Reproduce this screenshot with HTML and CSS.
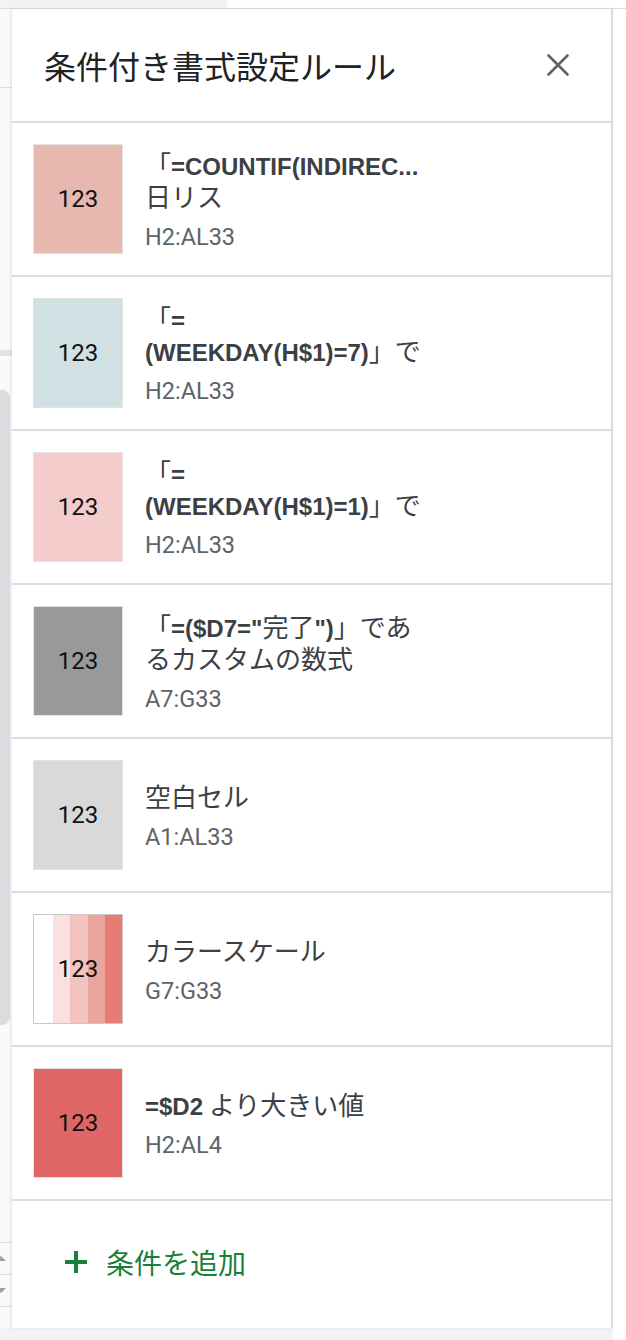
FILE: index.html
```html
<!DOCTYPE html>
<html lang="ja">
<head>
<meta charset="utf-8">
<title>条件付き書式設定ルール</title>
<link rel="stylesheet" href="styles.css">
</head>
<body>
<div class="topbar"><div class="topbar-tab"></div></div>
<div class="main">
  <div class="gutter">
    <div class="g-a"></div>
    <div class="g-line"></div>
    <div class="g-b"></div>
    <div class="g-band"></div>
    <div class="g-c"></div>
    <div class="g-thumb"></div>
    <div class="g-d"></div>
    <div class="g-btn"><span class="tri-up"></span></div>
    <div class="g-btn"><span class="tri-down"></span></div>
    <div class="g-e"></div>
  </div>
  <aside class="panel">
    <header class="panel-header">
      <h1 class="panel-title">条件付き書式設定ルール</h1>
      <button class="close-btn" aria-label="閉じる">
        <svg width="24" height="24" viewBox="0 0 24 24"><path d="M2.5 2.5L21.5 21.5M21.5 2.5L2.5 21.5" stroke="#5f6368" stroke-width="2.6" stroke-linecap="round" fill="none"/></svg>
      </button>
    </header>

    <div class="rule">
      <div class="swatch sw-berry">123</div>
      <div class="rule-text">
        <div class="line"><span class="ja">「</span><b>=COUNTIF(INDIREC...</b></div>
        <div class="line"><span class="ja">日リス</span></div>
        <div class="line range">H2:AL33</div>
      </div>
    </div>

    <div class="rule">
      <div class="swatch sw-cyan">123</div>
      <div class="rule-text">
        <div class="line"><span class="ja">「</span><b>=</b></div>
        <div class="line"><b>(WEEKDAY(H$1)=7)</b><span class="ja">」で</span></div>
        <div class="line range">H2:AL33</div>
      </div>
    </div>

    <div class="rule">
      <div class="swatch sw-pink">123</div>
      <div class="rule-text">
        <div class="line"><span class="ja">「</span><b>=</b></div>
        <div class="line"><b>(WEEKDAY(H$1)=1)</b><span class="ja">」で</span></div>
        <div class="line range">H2:AL33</div>
      </div>
    </div>

    <div class="rule">
      <div class="swatch sw-dark">123</div>
      <div class="rule-text">
        <div class="line"><span class="ja">「</span><b>=($D7="</b><span class="ja">完了</span><b>")</b><span class="ja">」であ</span></div>
        <div class="line"><span class="ja">るカスタムの数式</span></div>
        <div class="line range">A7:G33</div>
      </div>
    </div>

    <div class="rule">
      <div class="swatch sw-gray">123</div>
      <div class="rule-text">
        <div class="line"><span class="ja">空白セル</span></div>
        <div class="line range">A1:AL33</div>
      </div>
    </div>

    <div class="rule">
      <div class="swatch sw-scale">123</div>
      <div class="rule-text">
        <div class="line"><span class="ja">カラースケール</span></div>
        <div class="line range">G7:G33</div>
      </div>
    </div>

    <div class="rule">
      <div class="swatch sw-red">123</div>
      <div class="rule-text">
        <div class="line"><b>=$D2</b> <span class="ja">より大きい値</span></div>
        <div class="line range">H2:AL4</div>
      </div>
    </div>

    <div class="add-rule">
      <svg class="plus" width="24" height="24" viewBox="0 0 24 24"><path d="M12 1V23M1 12H23" stroke="#188038" stroke-width="4" fill="none"/></svg>
      <span class="add-label">条件を追加</span>
    </div>
  </aside>
</div>
<div class="bottombar"></div>
</body>
</html>
```

FILE: styles.css
```css
html, body {
  margin: 0;
  padding: 0;
}

body {
  width: 626px;
  height: 1340px;
  overflow: hidden;
  background: #ffffff;
  font-family: Roboto, "Noto Sans CJK JP", sans-serif;
  color: #3c4043;
}

.topbar {
  height: 8px;
  border-bottom: 1px solid #dadce0;
  display: flex;
}

.topbar-tab {
  width: 227px;
  background: #f1f3f4;
}

.main {
  display: flex;
  height: 1319px;
}

/* spreadsheet strip visible at the left */
.gutter {
  width: 12px;
  flex: none;
  display: flex;
  flex-direction: column;
  background: #fafafa;
  overflow: hidden;
}

.g-a { height: 78px; background: #f8f9fa; }
.g-line { height: 1px; background: #dadce0; }
.g-b { height: 262px; background: #f8f9fa; }
.g-band { height: 6px; background: #e3e3e3; }
.g-c { height: 34px; }
.g-thumb {
  height: 635px;
  width: 10px;
  background: #dadce0;
  border-radius: 0 8px 8px 0;
}
.g-d { height: 217px; }
.g-btn {
  height: 31px;
  border-top: 1px solid #dadce0;
  display: flex;
  align-items: center;
}
.g-e {
  flex: 1;
  border-top: 1px solid #dadce0;
}

.tri-up, .tri-down {
  width: 0;
  height: 0;
  margin-left: -4px;
  border-left: 5px solid transparent;
  border-right: 5px solid transparent;
}
.tri-up { border-bottom: 5px solid #9aa0a6; }
.tri-down { border-top: 5px solid #9aa0a6; }

/* sidebar panel */
.panel {
  width: 599px;
  flex: none;
  background: #ffffff;
  border-right: 2px solid #dadce0;
  box-shadow: -1px 0 3px rgba(0, 0, 0, 0.10);
  display: flex;
  flex-direction: column;
}

.panel-header {
  height: 112px;
  flex: none;
  border-bottom: 2px solid #dadce0;
  display: flex;
  align-items: center;
  justify-content: space-between;
  padding: 0 33px 0 32px;
}

.panel-title {
  margin: 0;
  font-family: "Noto Sans CJK JP", sans-serif;
  font-size: 32px;
  font-weight: 400;
  line-height: 1;
  color: #202124;
}

.close-btn {
  width: 40px;
  height: 40px;
  padding: 0;
  border: 0;
  background: transparent;
  display: flex;
  align-items: center;
  justify-content: center;
}

.rule {
  height: 152px;
  flex: none;
  border-bottom: 2px solid #dadce0;
  display: flex;
  align-items: center;
  padding-left: 21px;
  gap: 22px;
}

.swatch {
  width: 90px;
  height: 110px;
  box-sizing: border-box;
  border: 1px solid #e3e3e3;
  display: flex;
  align-items: center;
  justify-content: center;
  font-family: Roboto, sans-serif;
  font-size: 24px;
  color: #111111;
  flex: none;
}

.sw-berry { background: #e6b8af; }
.sw-cyan { background: #d0e0e3; }
.sw-pink { background: #f4cccc; }
.sw-dark { background: #999999; }
.sw-gray { background: #d9d9d9; }
.sw-red { background: #e06666; }
.sw-scale {
  border-color: #c8c8c8;
  background: linear-gradient(90deg,
    #ffffff 0, #ffffff 19px,
    #fae1df 19px, #fae1df 36px,
    #f3c3bf 36px, #f3c3bf 54px,
    #eca49f 54px, #eca49f 71px,
    #e67c73 71px, #e67c73 100%);
}

.rule-text {
  display: flex;
  flex-direction: column;
  padding-top: 6px;
}

.line {
  height: 32px;
  line-height: 32px;
  font-size: 23.5px;
  white-space: nowrap;
  color: #3c4043;
}

.line b {
  font-family: "Liberation Sans", Arial, sans-serif;
  font-size: 24px;
  font-weight: 700;
  color: #3c4043;
}

.ja {
  font-family: "Noto Sans CJK JP", sans-serif;
  font-size: 26px;
  line-height: 26px;
  font-weight: 400;
}

.range {
  margin-top: 6px;
  color: #5f6368;
}

.add-rule {
  flex: 1;
  display: flex;
  align-items: center;
  padding-left: 52px;
  padding-bottom: 5px;
  gap: 18px;
}

.plus {
  flex: none;
}

.add-label {
  font-family: "Noto Sans CJK JP", sans-serif;
  font-size: 28px;
  color: #188038;
  line-height: 1;
}

.bottombar {
  width: 613px;
  height: 12px;
  background: #f1f3f4;
}
```
